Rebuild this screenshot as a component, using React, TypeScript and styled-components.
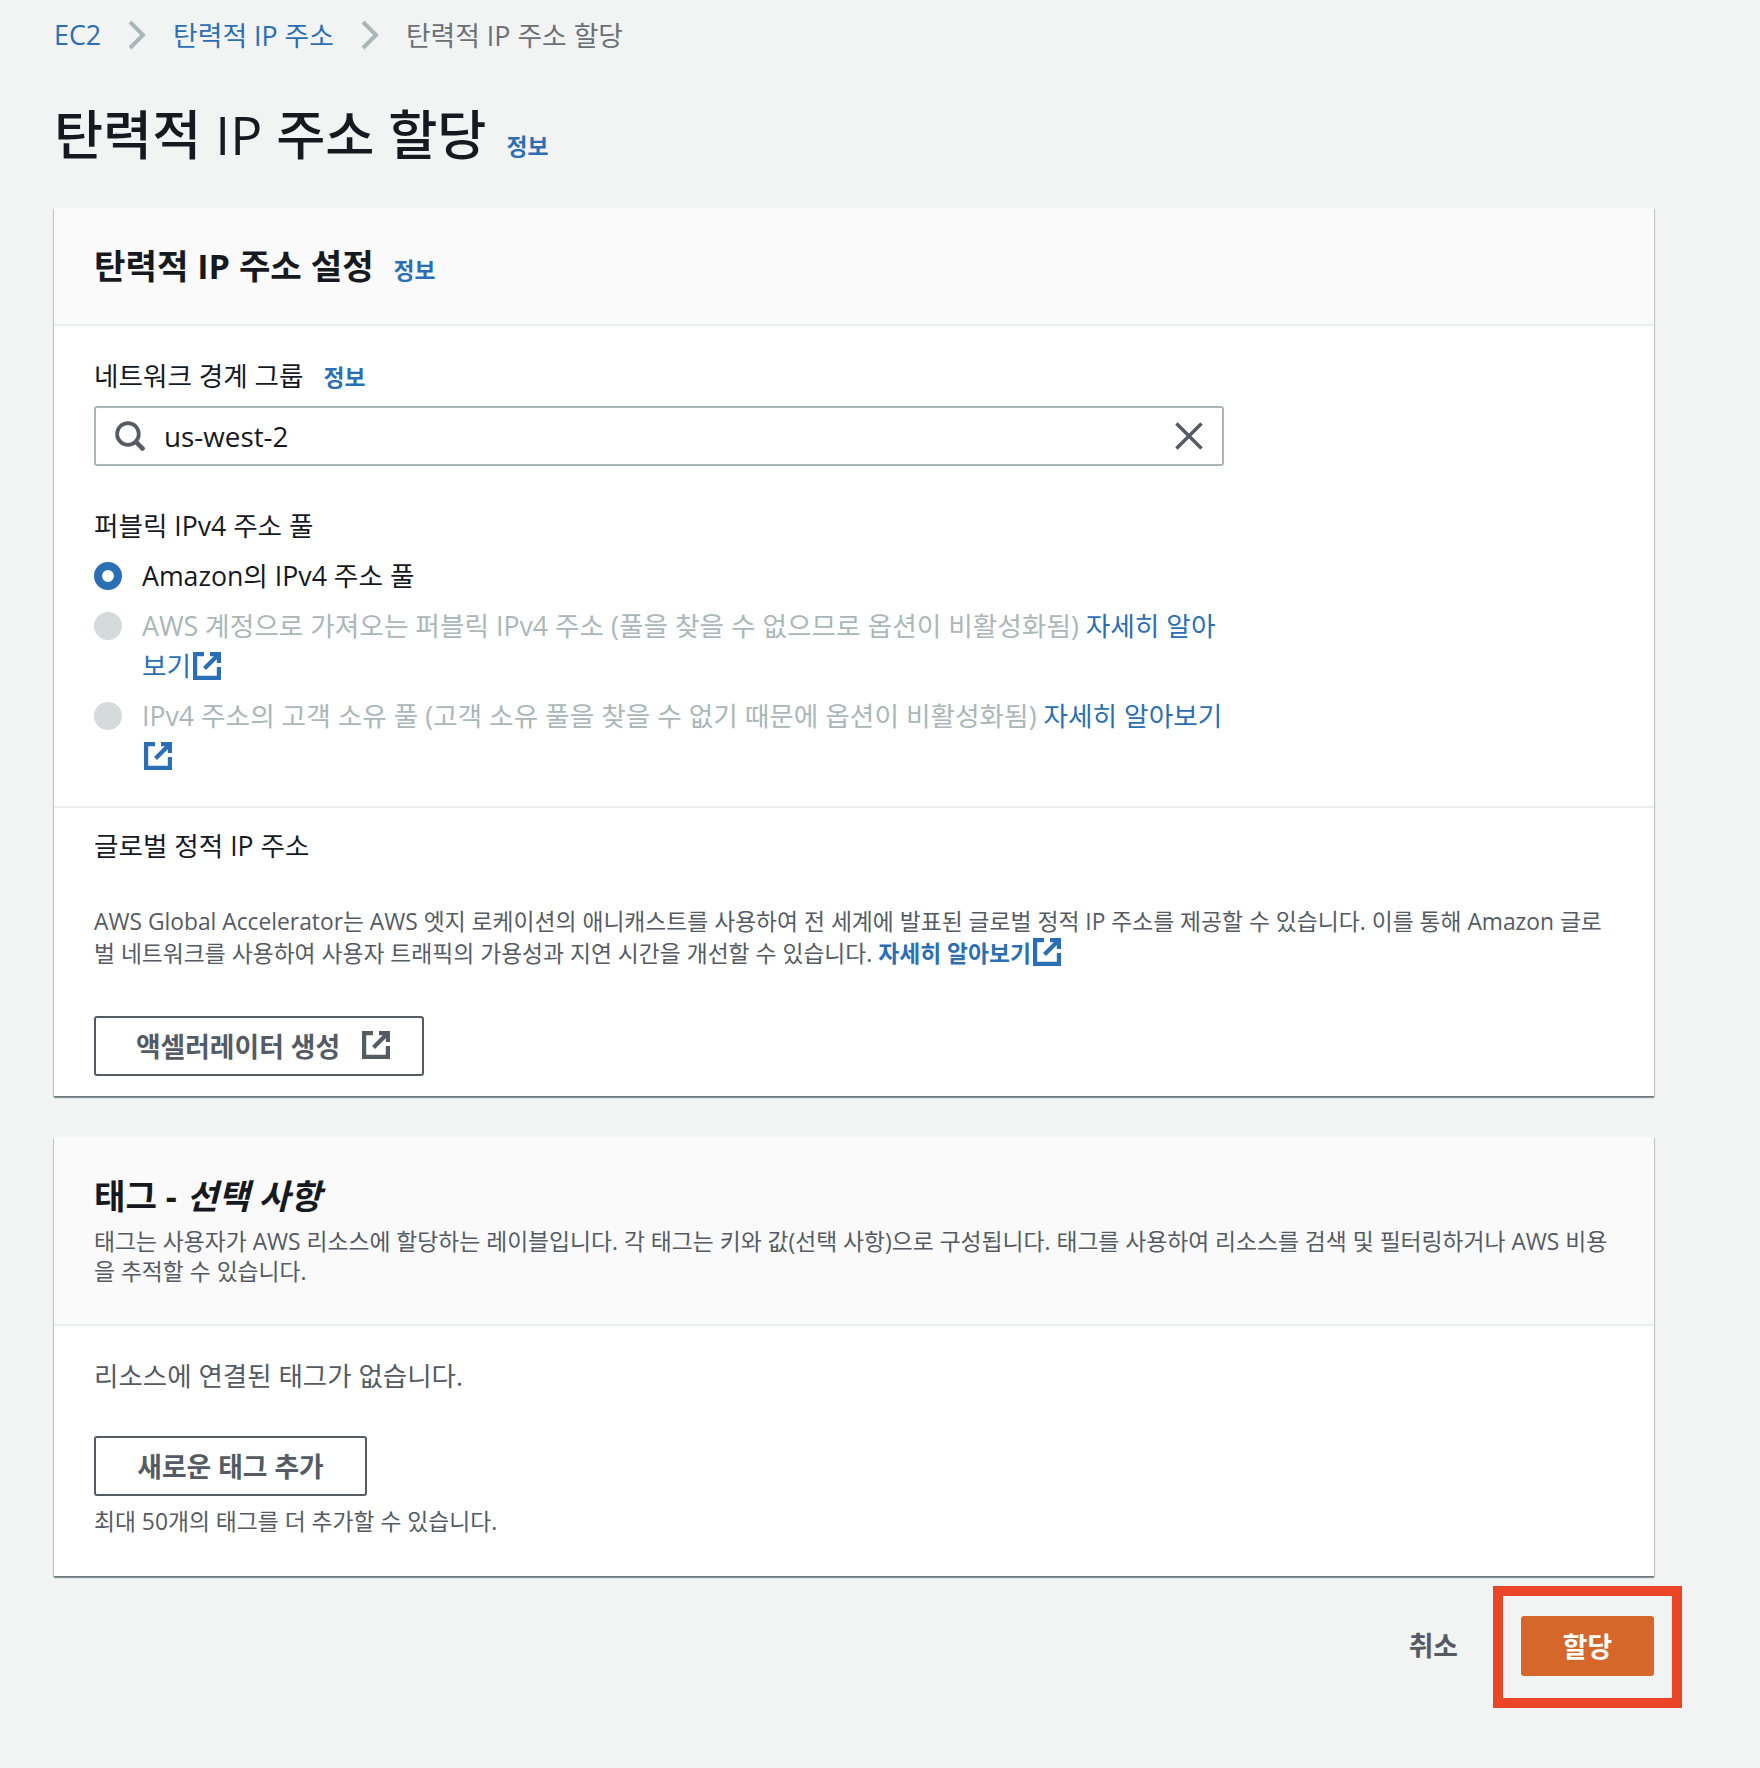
import React from 'react';
import styled, { createGlobalStyle } from 'styled-components';

const colors = {
  page: '#f2f3f3',
  white: '#ffffff',
  headerBg: '#fafafa',
  text: '#16191f',
  gray: '#545b64',
  crumb: '#687078',
  blue: '#2a6fb5',
  disabled: '#aab7b8',
  radioOff: '#d5dbdb',
  divider: '#eaeded',
  orange: '#d6672a',
  red: '#eb4528',
};

const GlobalStyle = createGlobalStyle`
  html, body {
    margin: 0;
    padding: 0;
    background: ${colors.page};
  }
  body {
    font-family: "Open Sans", "Noto Sans CJK KR", sans-serif;
    color: ${colors.text};
    font-size: 26.7px;
  }
  * {
    box-sizing: border-box;
  }
`;

const Page = styled.div`
  width: 1760px;
  height: 1768px;
  padding: 0 106px 0 54px;
`;

const Breadcrumbs = styled.nav`
  display: flex;
  align-items: center;
  height: 69px;
  font-size: 26.8px;
`;

const Crumb = styled.a<{ $current?: boolean }>`
  color: ${(p) => (p.$current ? colors.crumb : colors.blue)};
`;

const Chevron = styled.svg`
  width: 18px;
  height: 30px;
  margin: 0 27px;
  fill: none;
  stroke: ${colors.disabled};
  stroke-width: 4;
`;

const TitleRow = styled.div`
  display: flex;
  align-items: baseline;
  height: 139px;
  padding-top: 28px;
`;

const Title = styled.h1`
  margin: 0;
  font-size: 53.4px;
  font-weight: 500;
  line-height: 76px;
`;

const InfoLink = styled.a`
  margin-left: 20px;
  color: ${colors.blue};
  font-size: 22.8px;
  font-weight: 700;
`;

const Card = styled.section`
  background: ${colors.white};
  box-shadow: 0 2px 1px 0 rgba(0, 28, 36, 0.4), 1px 1px 1px 0 rgba(0, 28, 36, 0.15),
    -1px 1px 1px 0 rgba(0, 28, 36, 0.15);
  margin-bottom: 41px;
`;

const CardHeader = styled.header<{ $height: number; $top: number }>`
  height: ${(p) => p.$height}px;
  background: ${colors.headerBg};
  border-bottom: 2px solid ${colors.divider};
  padding: ${(p) => p.$top}px 40px 0;
`;

const CardTitle = styled.h2`
  display: flex;
  align-items: baseline;
  margin: 0;
  font-size: 34.2px;
  font-weight: 700;
  line-height: 54px;
`;

const Em = styled.em`
  margin-left: 10px;
  font-weight: 700;
`;

const HeaderText = styled.p`
  margin: 4px 0 0;
  color: ${colors.gray};
  font-size: 22.8px;
  line-height: 30px;
`;

const Section = styled.div<{ $height: number; $top: number; $line?: boolean }>`
  height: ${(p) => p.$height}px;
  padding: ${(p) => p.$top}px 40px 0;
  border-bottom: ${(p) => (p.$line ? `2px solid ${colors.divider}` : 'none')};
`;

const Label = styled.div`
  display: flex;
  align-items: baseline;
  font-size: 26.6px;
  line-height: 40px;
`;

const PoolLabel = styled(Label)`
  margin-bottom: 10px;
`;

const SearchBox = styled.div`
  display: flex;
  align-items: center;
  width: 1130px;
  height: 60px;
  margin: 8px 0 40px;
  padding: 0 19px;
  border: 2px solid ${colors.disabled};
  border-radius: 3px;
`;

const BoxIcon = styled.svg<{ $size: number }>`
  flex: none;
  width: ${(p) => p.$size}px;
  height: ${(p) => p.$size}px;
  fill: none;
  stroke: ${colors.gray};
  stroke-width: 3.6;
`;

const SearchValue = styled.span`
  flex: 1;
  margin-left: 19px;
  color: ${colors.text};
  font-size: 27.8px;
`;

const RadioRow = styled.div`
  display: flex;
  width: 1180px;
  margin-bottom: 10px;
  line-height: 40px;
  font-size: 26.7px;
`;

const RadioDot = styled.span<{ $checked?: boolean }>`
  flex: none;
  width: 28px;
  height: 28px;
  margin: 6px 20px 0 0;
  border-radius: 50%;
  background: ${(p) => (p.$checked ? colors.white : colors.radioOff)};
  border: ${(p) => (p.$checked ? `8px solid ${colors.blue}` : 'none')};
`;

const RadioText = styled.span<{ $disabled?: boolean }>`
  color: ${(p) => (p.$disabled ? colors.disabled : colors.text)};
`;

const TextLink = styled.a<{ $bold?: boolean }>`
  color: ${colors.blue};
  font-weight: ${(p) => (p.$bold ? 700 : 400)};
`;

const ExtIcon = styled.svg`
  flex: none;
  width: 28px;
  height: 28px;
  margin-left: 2px;
  vertical-align: -4px;
  fill: none;
  stroke: currentColor;
  stroke-width: 4.2;
`;

const Description = styled.p`
  margin: 40px 0 0;
  color: ${colors.gray};
  font-size: 22.8px;
  line-height: 31.5px;
`;

const OutlineButton = styled.button<{ $width: number }>`
  display: flex;
  align-items: center;
  justify-content: center;
  gap: 20px;
  width: ${(p) => p.$width}px;
  height: 60px;
  padding: 0 0 2px;
  background: ${colors.white};
  border: 2px solid ${colors.gray};
  border-radius: 3px;
  color: ${colors.gray};
  font-family: inherit;
  font-size: 26.8px;
  font-weight: 700;
`;

const AcceleratorButton = styled(OutlineButton)`
  margin-top: 47px;
  padding-left: 8px;
`;

const BodyText = styled.p`
  margin: 0 0 40px;
  color: ${colors.gray};
  font-size: 26.5px;
  line-height: 40px;
`;

const HelpText = styled.p`
  margin: 11px 0 0;
  color: ${colors.gray};
  font-size: 22.8px;
  line-height: 30px;
`;

const Footer = styled.footer`
  display: flex;
  align-items: center;
  justify-content: flex-end;
  height: 60px;
  margin-top: -1px;
`;

const CancelLink = styled.a`
  margin: 0 63px 3px 0;
  color: ${colors.gray};
  font-size: 26.8px;
  font-weight: 700;
`;

const SubmitWrap = styled.div`
  position: relative;
`;

const SubmitButton = styled.button`
  display: block;
  width: 133px;
  height: 60px;
  padding: 0 0 2px;
  background: ${colors.orange};
  border: none;
  border-radius: 3px;
  color: ${colors.white};
  font-family: inherit;
  font-size: 26.8px;
  font-weight: 700;
`;

const Highlight = styled.div`
  position: absolute;
  left: -28px;
  top: -30px;
  width: 189px;
  height: 122px;
  border: 10px solid ${colors.red};
  pointer-events: none;
`;

function ExternalIcon(): JSX.Element {
  return (
    <ExtIcon viewBox="0 0 28 28">
      <path d="M11 2.1H2.1v23.8h23.8V15" />
      <path d="M17 2.1h8.9V11" />
      <path d="M24.5 3.5L11.5 16.5" />
    </ExtIcon>
  );
}

function ChevronIcon(): JSX.Element {
  return (
    <Chevron viewBox="0 0 18 30">
      <path d="M2 2l13 13L2 28" />
    </Chevron>
  );
}

export default function App(): JSX.Element {
  return (
    <Page>
      <GlobalStyle />
      <Breadcrumbs>
        <Crumb>EC2</Crumb>
        <ChevronIcon />
        <Crumb>탄력적 IP 주소</Crumb>
        <ChevronIcon />
        <Crumb $current>탄력적 IP 주소 할당</Crumb>
      </Breadcrumbs>

      <TitleRow>
        <Title>탄력적 IP 주소 할당</Title>
        <InfoLink>정보</InfoLink>
      </TitleRow>

      <Card>
        <CardHeader $height={118} $top={31}>
          <CardTitle>
            탄력적 IP 주소 설정
            <InfoLink>정보</InfoLink>
          </CardTitle>
        </CardHeader>
        <Section $height={482} $top={30} $line>
          <Label>
            네트워크 경계 그룹
            <InfoLink>정보</InfoLink>
          </Label>
          <SearchBox>
            <BoxIcon $size={30} viewBox="0 0 29 29">
              <circle cx="12.5" cy="12.5" r="10.5" />
              <path d="M20 20l8 8" strokeWidth="4.4" />
            </BoxIcon>
            <SearchValue>us-west-2</SearchValue>
            <BoxIcon $size={28} viewBox="0 0 29 29">
              <path d="M1.5 1.5l26 26M27.5 1.5l-26 26" />
            </BoxIcon>
          </SearchBox>
          <PoolLabel>퍼블릭 IPv4 주소 풀</PoolLabel>
          <RadioRow>
            <RadioDot $checked />
            <RadioText>Amazon의 IPv4 주소 풀</RadioText>
          </RadioRow>
          <RadioRow>
            <RadioDot />
            <RadioText $disabled>
              AWS 계정으로 가져오는 퍼블릭 IPv4 주소 (풀을 찾을 수 없으므로 옵션이 비활성화됨){' '}
              <TextLink>
                자세히 알아
                <br />
                보기
                <ExternalIcon />
              </TextLink>
            </RadioText>
          </RadioRow>
          <RadioRow>
            <RadioDot />
            <RadioText $disabled>
              IPv4 주소의 고객 소유 풀 (고객 소유 풀을 찾을 수 없기 때문에 옵션이 비활성화됨){' '}
              <TextLink>
                자세히 알아보기
                <br />
                <ExternalIcon />
              </TextLink>
            </RadioText>
          </RadioRow>
        </Section>
        <Section $height={288} $top={18}>
          <Label>글로벌 정적 IP 주소</Label>
          <Description>
            AWS Global Accelerator는 AWS 엣지 로케이션의 애니캐스트를 사용하여 전 세계에 발표된 글로벌 정적 IP 주소를 제공할 수 있습니다. 이를 통해 Amazon 글로
            <br />
            벌 네트워크를 사용하여 사용자 트래픽의 가용성과 지연 시간을 개선할 수 있습니다.{' '}
            <TextLink $bold>
              자세히 알아보기
              <ExternalIcon />
            </TextLink>
          </Description>
          <AcceleratorButton $width={330}>
            액셀러레이터 생성
            <ExternalIcon />
          </AcceleratorButton>
        </Section>
      </Card>

      <Card>
        <CardHeader $height={189} $top={32}>
          <CardTitle>
            태그 -<Em>선택 사항</Em>
          </CardTitle>
          <HeaderText>
            태그는 사용자가 AWS 리소스에 할당하는 레이블입니다. 각 태그는 키와 값(선택 사항)으로 구성됩니다. 태그를 사용하여 리소스를 검색 및 필터링하거나 AWS 비용
            <br />을 추적할 수 있습니다.
          </HeaderText>
        </CardHeader>
        <Section $height={250} $top={30}>
          <BodyText>리소스에 연결된 태그가 없습니다.</BodyText>
          <OutlineButton $width={273}>새로운 태그 추가</OutlineButton>
          <HelpText>최대 50개의 태그를 더 추가할 수 있습니다.</HelpText>
        </Section>
      </Card>

      <Footer>
        <CancelLink>취소</CancelLink>
        <SubmitWrap>
          <SubmitButton>할당</SubmitButton>
          <Highlight />
        </SubmitWrap>
      </Footer>
    </Page>
  );
}
